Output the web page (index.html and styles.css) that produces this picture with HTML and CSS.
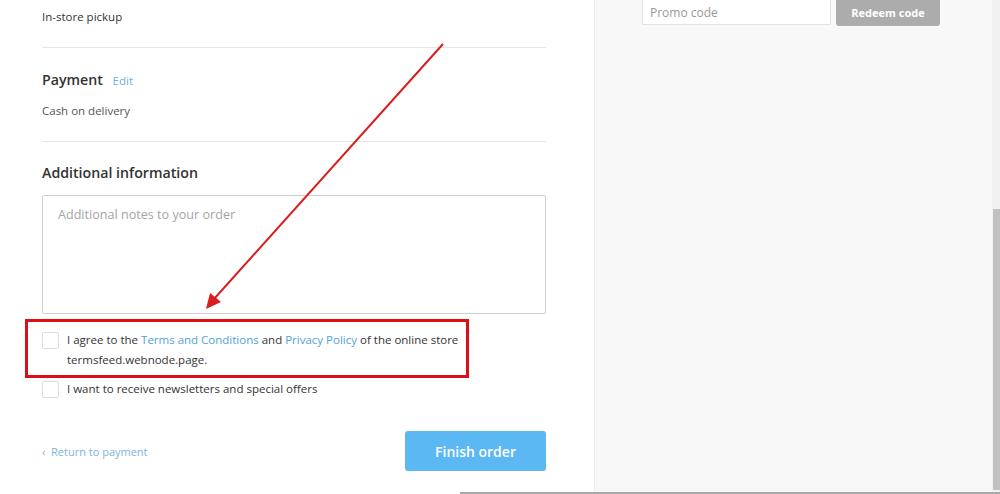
FILE: index.html
```html
<!DOCTYPE html>
<html>
<head>
    <title>Checkout - Summary</title>
    <link rel="stylesheet" href="styles.css">
</head>
<body>
    <div id="page">
        <div id="main">
            <div class="section first">
                <p class="value dark">In-store pickup</p>
            </div>

            <div class="section">
                <h2>Payment <a href="#" class="edit">Edit</a></h2>
                <p class="value">Cash on delivery</p>
            </div>

            <div class="section last">
                <h2>Additional information</h2>
                <textarea class="notes" placeholder="Additional notes to your order"></textarea>

                <label class="check agree">
                    <span class="box"></span>
                    <span class="text">I agree to the <a href="#">Terms and Conditions</a> and <a href="#">Privacy Policy</a> of the online store termsfeed.webnode.page.</span>
                    <span class="highlight"></span>
                </label>

                <label class="check">
                    <span class="box"></span>
                    <span class="text">I want to receive newsletters and special offers</span>
                </label>

                <div class="actions">
                    <a href="#" class="back">&lsaquo;&nbsp; Return to payment</a>
                    <button class="finish">Finish order</button>
                </div>
            </div>
        </div>

        <div id="summary">
            <div class="promo">
                <input type="text" placeholder="Promo code">
                <button>Redeem code</button>
            </div>
        </div>

        <div id="scrollbar">
            <div class="thumb"></div>
        </div>
    </div>

    <svg id="arrow" width="1000" height="494" viewBox="0 0 1000 494">
        <line x1="443" y1="44" x2="214" y2="299" stroke="#d81e1e" stroke-width="2"/>
        <polygon points="206,309 210,293 221,302" fill="#d81e1e"/>
    </svg>

    <div id="hscroll"></div>
</body>
</html>
```

FILE: styles.css
```css
html, body {
    margin: 0;
    height: 100%;
    overflow: hidden;
}

body {
    font-family: "Open Sans", Arial, sans-serif;
    font-size: 11.5px;
    color: #555;
    background: #fff;
}

#page {
    display: flex;
    height: 494px;
}

#main {
    width: 504px;
    padding: 0 48px 0 42px;
    flex-shrink: 0;
}

.section {
    border-bottom: 1px solid #e6e6e6;
    padding: 20px 0 20px;
}

.section.first {
    padding-top: 7px;
}

.section.last {
    border-bottom: none;
    padding-top: 19px;
}

h2 {
    margin: 0;
    font-size: 14.2px;
    font-weight: 600;
    line-height: 24px;
    color: #333;
}

.edit {
    margin-left: 6px;
    font-size: 11.5px;
    font-weight: 400;
    color: #6cb1de;
    text-decoration: none;
}

.value {
    margin: 8px 0 0;
    line-height: 20px;
}

.value.dark {
    margin: 0;
    color: #333;
}

.notes {
    display: block;
    box-sizing: border-box;
    width: 504px;
    height: 119px;
    margin-top: 10px;
    padding: 10px 15px;
    border: 1px solid #cfcfcf;
    border-radius: 2px;
    font-family: "Open Sans", Arial, sans-serif;
    font-size: 12.6px;
    resize: none;
}

.notes::placeholder {
    color: #a5a5a5;
}

.check {
    position: relative;
    display: flex;
    align-items: flex-start;
    margin-top: 9px;
    line-height: 20px;
    color: #333;
}

.check.agree {
    margin-top: 16px;
}

.check .box {
    flex-shrink: 0;
    box-sizing: border-box;
    width: 17px;
    height: 17px;
    margin: 2px 8px 0 0;
    border: 1px solid #dcdcdc;
    border-radius: 2px;
    background: #fff;
}

.check .text {
    width: 400px;
}

.check a {
    color: #4fa3d9;
    text-decoration: none;
}

.highlight {
    position: absolute;
    left: -17px;
    top: -11px;
    width: 438px;
    height: 53px;
    border: 3px solid #dc0f14;
}

.actions {
    display: flex;
    justify-content: space-between;
    align-items: center;
    margin-top: 32px;
}

.back {
    font-size: 11px;
    color: #7db4da;
    text-decoration: none;
}

.finish {
    width: 141px;
    height: 40px;
    border: none;
    border-radius: 3px;
    background: #5bb8f2;
    color: #fff;
    font-family: "Open Sans", Arial, sans-serif;
    font-size: 14px;
    font-weight: 600;
}

#summary {
    flex: 1;
    background: #f8f8f8;
    border-left: 1px solid #ececec;
    padding-left: 47px;
}

.promo {
    display: flex;
    gap: 5px;
    margin-top: -11px;
}

.promo input {
    box-sizing: border-box;
    width: 189px;
    height: 36px;
    padding: 10px 7px 0;
    border: 1px solid #e2e2e2;
    background: #fff;
    font-family: "Open Sans", Arial, sans-serif;
    font-size: 12px;
}

.promo input::placeholder {
    color: #999;
}

.promo button {
    width: 104px;
    height: 37px;
    padding-top: 10px;
    border: none;
    border-radius: 3px;
    background: #acacac;
    color: #fff;
    font-family: "Open Sans", Arial, sans-serif;
    font-size: 11px;
    font-weight: 700;
}

#scrollbar {
    width: 8px;
    background: #f1f1f1;
    padding-top: 209px;
}

#scrollbar .thumb {
    height: 281px;
    margin-left: 1px;
    background: #c1c1c1;
}

#arrow {
    position: absolute;
    left: 0;
    top: 0;
    pointer-events: none;
}

#hscroll {
    position: absolute;
    left: 460px;
    right: 0;
    bottom: 0;
    height: 2px;
    background: #a8a8a8;
}
```
